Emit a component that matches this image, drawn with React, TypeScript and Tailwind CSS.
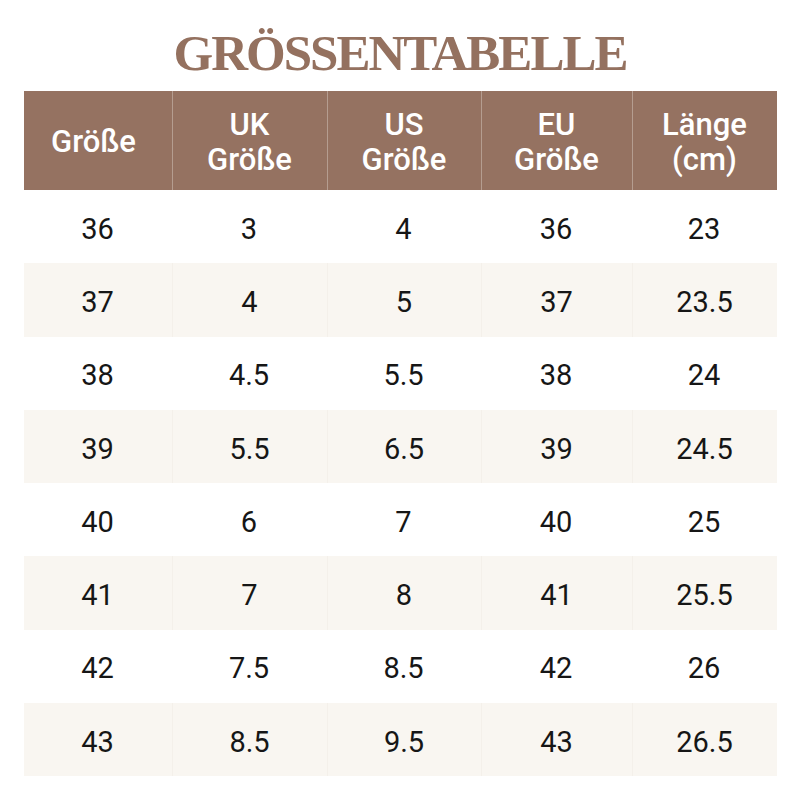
import React from "react";

const rows = [
  ["36", "3", "4", "36", "23"],
  ["37", "4", "5", "37", "23.5"],
  ["38", "4.5", "5.5", "38", "24"],
  ["39", "5.5", "6.5", "39", "24.5"],
  ["40", "6", "7", "40", "25"],
  ["41", "7", "8", "41", "25.5"],
  ["42", "7.5", "8.5", "42", "26"],
  ["43", "8.5", "9.5", "43", "26.5"],
];

const widths = ["w-[148px]", "w-[155px]", "w-[154px]", "w-[151px]", "w-[145px]"];

const headers: string[][] = [
  ["Größe"],
  ["UK", "Größe"],
  ["US", "Größe"],
  ["EU", "Größe"],
  ["Länge", "(cm)"],
];

export default function App() {
  return (
    <div className="w-[800px] h-[800px] bg-white flex flex-col items-center" style={{ fontFamily: "Roboto, 'Noto Sans', sans-serif" }}>
      <h1
        className="mt-[24px] h-[58px] text-[51px] leading-[58px] font-bold text-[#94715f] tracking-[-2px]"
        style={{ fontFamily: "'Liberation Serif', 'DejaVu Serif', serif" }}
      >
        GRÖSSENTABELLE
      </h1>
      <div className="mt-[9px] w-[753px] flex flex-col">
        <div className="flex h-[99px] bg-[#957261]">
          {headers.map((h, i) => (
            <div
              key={i}
              className={`${widths[i]} flex flex-col items-center justify-center pt-[2px] text-white font-medium text-[31px] leading-[35px] ${i > 0 ? "border-l border-[#b59d90]" : ""} ${i === 0 ? "pr-[8px]" : ""}`}
            >
              {h.map((t, j) => (
                <span key={j}>{t}</span>
              ))}
            </div>
          ))}
        </div>
        {rows.map((r, ri) => (
          <div key={ri} className={`flex h-[73.25px] ${ri % 2 === 1 ? "bg-[#f9f6f1]" : "bg-white"}`}>
            {r.map((c, ci) => (
              <div
                key={ci}
                className={`${widths[ci]} flex items-center justify-center pt-[6px] text-[29px] text-[#161616] ${ci > 0 && ri % 2 === 1 ? "border-l border-[#f4f0ea]" : ""}`}
              >
                {c}
              </div>
            ))}
          </div>
        ))}
      </div>
    </div>
  );
}
